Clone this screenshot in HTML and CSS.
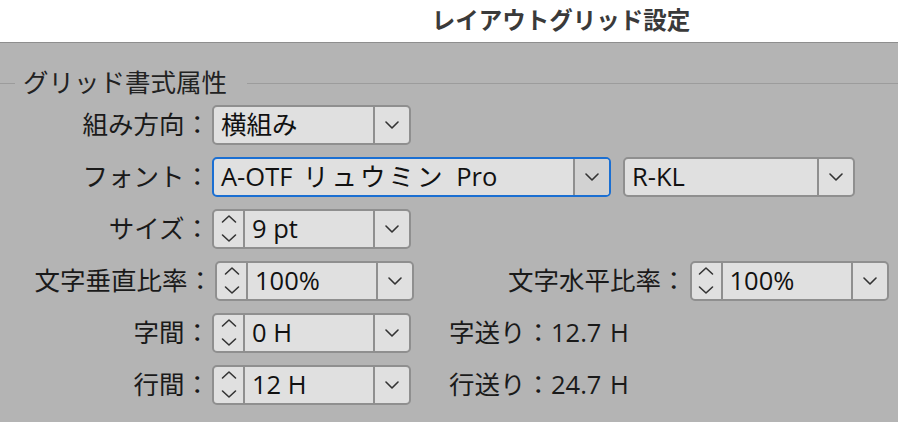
FILE: index.html
```html
<!DOCTYPE html>
<html lang="ja">
<head>
  <meta charset="UTF-8" />
  <title>レイアウトグリッド設定</title>
  <link rel="stylesheet" href="styles.css">
</head>
<body>
  <div class="titlebar">
    <h1>レイアウトグリッド設定</h1>
  </div>

  <div class="panel">
    <div class="group-head">
      <span class="line short"></span>
      <span class="group-title">グリッド書式属性</span>
      <span class="line"></span>
    </div>

    <div class="rows">
      <!-- 組み方向 -->
      <div class="row">
        <label class="lbl">組み方向：</label>
        <div class="combo w-std">
          <span class="value">横組み</span>
          <span class="arrow"><svg width="14" height="8" viewBox="0 0 14 8"><polyline points="1,1 7,7 13,1" /></svg></span>
        </div>
      </div>

      <!-- フォント -->
      <div class="row">
        <label class="lbl">フォント：</label>
        <div class="combo w-font focus">
          <span class="value">A-OTF&nbsp;<span class="kana">リュウミン</span>&nbsp;Pro</span>
          <span class="arrow dark"><svg width="14" height="8" viewBox="0 0 14 8"><polyline points="1,1 7,7 13,1" /></svg></span>
        </div>
        <div class="combo w-sub">
          <span class="value">R-KL</span>
          <span class="arrow"><svg width="14" height="8" viewBox="0 0 14 8"><polyline points="1,1 7,7 13,1" /></svg></span>
        </div>
      </div>

      <!-- サイズ -->
      <div class="row">
        <label class="lbl">サイズ：</label>
        <div class="combo w-std">
          <span class="spin"><svg width="16" height="30" viewBox="0 0 16 30"><polyline points="1.5,8 8,2 14.5,8" /><polyline points="1.5,21 8,27 14.5,21" /></svg></span>
          <span class="value">9 pt</span>
          <span class="arrow"><svg width="14" height="8" viewBox="0 0 14 8"><polyline points="1,1 7,7 13,1" /></svg></span>
        </div>
      </div>

      <!-- 比率 -->
      <div class="row r4">
        <label class="lbl">文字垂直比率：</label>
        <div class="combo w-std">
          <span class="spin"><svg width="16" height="30" viewBox="0 0 16 30"><polyline points="1.5,8 8,2 14.5,8" /><polyline points="1.5,21 8,27 14.5,21" /></svg></span>
          <span class="value">100%</span>
          <span class="arrow"><svg width="14" height="8" viewBox="0 0 14 8"><polyline points="1,1 7,7 13,1" /></svg></span>
        </div>
        <label class="lbl-right">文字水平比率：</label>
        <div class="combo w-std">
          <span class="spin"><svg width="16" height="30" viewBox="0 0 16 30"><polyline points="1.5,8 8,2 14.5,8" /><polyline points="1.5,21 8,27 14.5,21" /></svg></span>
          <span class="value">100%</span>
          <span class="arrow"><svg width="14" height="8" viewBox="0 0 14 8"><polyline points="1,1 7,7 13,1" /></svg></span>
        </div>
      </div>

      <!-- 字間 -->
      <div class="row">
        <label class="lbl">字間：</label>
        <div class="combo w-std">
          <span class="spin"><svg width="16" height="30" viewBox="0 0 16 30"><polyline points="1.5,8 8,2 14.5,8" /><polyline points="1.5,21 8,27 14.5,21" /></svg></span>
          <span class="value">0 H</span>
          <span class="arrow"><svg width="14" height="8" viewBox="0 0 14 8"><polyline points="1,1 7,7 13,1" /></svg></span>
        </div>
        <span class="info">字送り：12.7 H</span>
      </div>

      <!-- 行間 -->
      <div class="row">
        <label class="lbl">行間：</label>
        <div class="combo w-std">
          <span class="spin"><svg width="16" height="30" viewBox="0 0 16 30"><polyline points="1.5,8 8,2 14.5,8" /><polyline points="1.5,21 8,27 14.5,21" /></svg></span>
          <span class="value">12 H</span>
          <span class="arrow"><svg width="14" height="8" viewBox="0 0 14 8"><polyline points="1,1 7,7 13,1" /></svg></span>
        </div>
        <span class="info">行送り：24.7 H</span>
      </div>
    </div>
  </div>
</body>
</html>
```

FILE: styles.css
```css
body {
  margin: 0;
  height: 422px;
  overflow: hidden;
  font-family: "Open Sans", "Noto Sans CJK JP", sans-serif;
  font-size: 25.5px;
  color: #1a1a1a;
  background-color: #b4b4b4;
}

.titlebar {
  height: 42px;
  background-color: #fff;
  border-bottom: 1px solid #8e8e8e;
  display: flex;
  align-items: center;
  justify-content: center;
  padding-left: 224px;
}

.titlebar h1 {
  margin: 0;
  font-size: 23.5px;
  font-weight: bold;
  color: #3a3a3a;
  line-height: 1;
}

.panel {
  padding-top: 22px;
}

/* グループ見出し */
.group-head {
  display: flex;
  align-items: center;
  height: 36px;
}

.group-head .line {
  flex: 1;
  height: 1px;
  background-color: #9c9c9c;
}

.group-head .line.short {
  flex: none;
  width: 15px;
}

.group-title {
  padding: 0 20px 0 8px;
  color: #222;
  line-height: 1;
}

.rows {
  margin-top: 4px;
  display: flex;
  flex-direction: column;
  gap: 12px;
}

.row {
  display: flex;
  align-items: center;
  height: 40px;
}

.lbl {
  width: 210px;
  margin-right: 2px;
  text-align: right;
  line-height: 1;
}

.r4 .lbl {
  width: 213px;
}

.lbl-right {
  margin-left: 94px;
  margin-right: 3px;
  line-height: 1;
}

.info {
  margin-left: 38px;
  line-height: 1;
  word-spacing: 2px;
}

/* コンボボックス */
.combo {
  box-sizing: border-box;
  height: 40px;
  display: flex;
  align-items: stretch;
  background-color: #e0e0e0;
  border: 2px solid #8f8f8f;
  border-radius: 5px;
  color: #111;
}

.combo.focus {
  border-color: #1b6fd2;
}

.w-std { width: 199px; }
.w-font { width: 399px; }
.w-sub { width: 232px; margin-left: 12px; }

.value {
  flex: 1;
  display: flex;
  align-items: center;
  padding-left: 7px;
  white-space: nowrap;
  line-height: 1;
}

.value .kana {
  letter-spacing: 3px;
  margin: 0 4px;
}

.arrow {
  width: 34px;
  display: flex;
  align-items: center;
  justify-content: center;
  border-left: 2px solid #8f8f8f;
}

.arrow.dark {
  background-color: #d2d2d2;
  border-radius: 0 3px 3px 0;
}

.spin {
  width: 29px;
  display: flex;
  align-items: center;
  justify-content: center;
  border-right: 2px solid #8f8f8f;
}

.arrow svg polyline,
.spin svg polyline {
  fill: none;
  stroke: #333;
  stroke-width: 1.6;
  stroke-linecap: round;
  stroke-linejoin: round;
}
```
